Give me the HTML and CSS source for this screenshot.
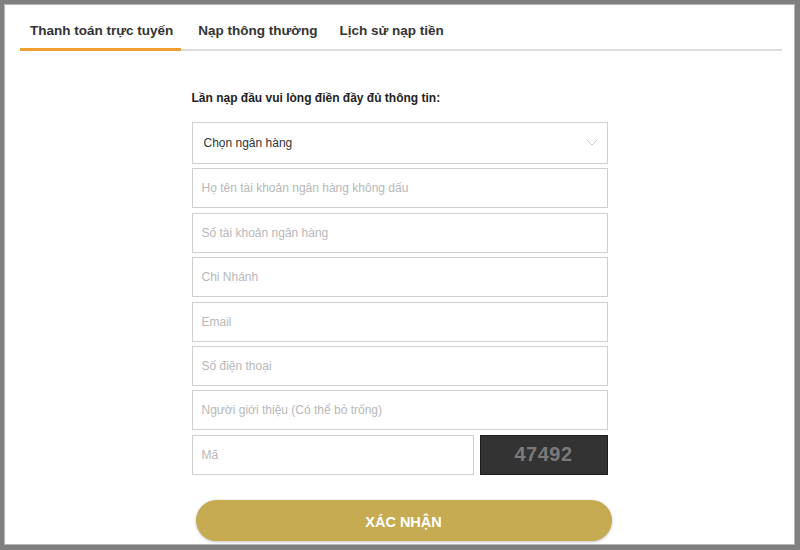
FILE: index.html
```html
<!DOCTYPE html>
<html lang="vi">
<head>
<meta charset="utf-8">
<link rel="stylesheet" href="styles.css">
</head>
<body>
<div class="panel">
  <div class="tabs">
    <div class="tab active">Thanh toán trực tuyến</div>
    <div class="tab">Nạp thông thường</div>
    <div class="tab">Lịch sử nạp tiền</div>
  </div>
  <form class="form">
    <div class="title">Lần nạp đầu vui lòng điền đầy đủ thông tin:</div>
    <div class="fields">
      <div class="select">
        <span>Chọn ngân hàng</span>
        <svg class="chev" width="12" height="7" viewBox="0 0 12 7"><polyline points="0.5,0.5 6,6 11.5,0.5" fill="none" stroke="#c8c8c8" stroke-width="1"/></svg>
      </div>
      <input class="field" placeholder="Họ tên tài khoản ngân hàng không dấu">
      <input class="field" placeholder="Số tài khoản ngân hàng">
      <input class="field" placeholder="Chi Nhánh">
      <input class="field" placeholder="Email">
      <input class="field" placeholder="Số điện thoại">
      <input class="field" placeholder="Người giới thiệu (Có thể bỏ trống)">
      <div class="row">
        <input class="field code" placeholder="Mã">
        <div class="captcha">47492</div>
      </div>
    </div>
    <button type="button" class="submit">XÁC NHẬN</button>
  </form>
</div>
</body>
</html>
```
FILE: styles.css
```css
html, body {
  margin: 0;
  padding: 0;
  background: #808080;
  font-family: "Liberation Sans", Arial, sans-serif;
}
body {
  padding: 4px 0 0 4px;
  height: 550px;
  box-sizing: border-box;
  overflow: hidden;
}
.panel {
  width: 791px;
  height: 541px;
  box-sizing: border-box;
  background: #fff;
  border: 1px solid #b4b4b4;
  overflow: hidden;
}
.tabs {
  display: flex;
  margin: 15px 12px 0 15px;
  height: 29px;
  border-bottom: 2px solid #dcdcdc;
}
.tab {
  padding: 1px 8px 7px 10px;
  margin-right: 7px;
  line-height: 20px;
  font-size: 13.5px;
  font-weight: bold;
  color: #333;
  height: 20px;
}
.tab:nth-child(2) { margin-right: 4px; }
.tab.active {
  border-bottom: 3px solid #f0a032;
}
.form {
  width: 416px;
  margin: 39px auto 0;
}
.title {
  font-size: 12px;
  font-weight: bold;
  color: #222;
  line-height: 16px;
  margin-bottom: 16px;
}
.fields {
  display: flex;
  flex-direction: column;
  gap: 4.4px;
}
.select {
  height: 42px;
  box-sizing: border-box;
  border: 1px solid #cfcfcf;
  display: flex;
  align-items: center;
  justify-content: space-between;
  padding: 0 9px 0 11px;
  font-size: 12px;
  color: #333;
}
.chev { margin-top: -1px; }
.field {
  display: block;
  width: 100%;
  height: 40px;
  box-sizing: border-box;
  border: 1px solid #cfcfcf;
  padding: 0 9px;
  font-family: "Liberation Sans", Arial, sans-serif;
  font-size: 12px;
  color: #333;
  outline: none;
  margin: 0;
}
.field::placeholder { color: #b8b8b8; }
.row {
  display: flex;
  gap: 6px;
}
.field.code { flex: 1; width: auto; }
.captcha {
  width: 128px;
  height: 40px;
  box-sizing: border-box;
  background: #333;
  border: 1px solid #1e1e1e;
  color: #7a7a7a;
  font-size: 20px;
  font-weight: bold;
  display: flex;
  align-items: center;
  justify-content: center;
  letter-spacing: 0.5px;
}
.submit {
  display: block;
  width: 416px;
  height: 41px;
  margin: 25px 0 0 4px;
  padding: 3px 0 0;
  border: none;
  border-radius: 21px;
  background: #c6ab52;
  color: #fff;
  font-family: "Liberation Sans", Arial, sans-serif;
  font-size: 14.5px;
  font-weight: bold;
  box-shadow: 0 1px 3px rgba(0,0,0,0.25);
}
```
